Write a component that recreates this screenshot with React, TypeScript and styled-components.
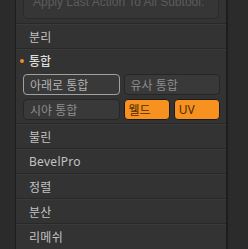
import React from 'react';
import styled, { createGlobalStyle } from 'styled-components';

const GlobalStyle = createGlobalStyle`
  html, body {
    margin: 0;
    padding: 0;
    background: #2b2b2b;
    overflow: hidden;
  }
  body {
    font-family: "Noto Sans", "Noto Sans CJK KR", sans-serif;
  }
`;

const Screen = styled.div`
  width: 248px;
  height: 249px;
  overflow: hidden;
  display: flex;
`;

const Panel = styled.div`
  margin-left: 15px;
  width: 210px;
  border-left: 1px solid #1d1d1d;
  border-right: 2px solid #1d1d1d;
  background: #333333;
  display: flex;
  flex-direction: column;
`;

const NoteBox = styled.div`
  margin: -21px 7px 4px 7px;
  height: 40px;
  box-sizing: border-box;
  padding: 15px 0 0 9px;
  background: #363636;
  border: 1px solid #2a2a2a;
  border-radius: 5px;
  color: #5c5c5c;
  font-family: "Liberation Sans", sans-serif;
  font-size: 12px;
  line-height: 14px;
  white-space: nowrap;
  overflow: hidden;
`;

const Row = styled.div`
  height: 25px;
  box-sizing: border-box;
  border-top: 1px solid #282828;
  box-shadow: inset 0 1px 0 #3a3a3a;
  display: flex;
  align-items: center;
  padding: 1px 0 0 13px;
  color: #c2c2c2;
  font-size: 12px;
  letter-spacing: 0.3px;
`;

const Section = styled.div`
  border-top: 1px solid #282828;
  box-shadow: inset 0 1px 0 #3a3a3a;
  padding-bottom: 3px;
`;

const SectionHead = styled.div`
  height: 24px;
  display: flex;
  align-items: center;
  gap: 5px;
  padding-left: 4px;
  color: #dcdcdc;
  font-size: 12px;
  font-weight: 500;
`;

const Dot = styled.span`
  width: 4px;
  height: 4px;
  border-radius: 50%;
  background: #f08c24;
`;

const ButtonGrid = styled.div`
  display: grid;
  grid-template-columns: repeat(4, 1fr);
  gap: 4px;
  padding: 1px 6px 0 7px;
`;

const Btn = styled.div<{ $span?: number; $on?: boolean; $focus?: boolean }>`
  grid-column: span ${(p) => p.$span ?? 1};
  height: 21px;
  box-sizing: border-box;
  border-radius: 4px;
  display: flex;
  align-items: center;
  padding-left: ${(p) => (p.$on ? 4 : 6)}px;
  font-size: 12px;
  background: ${(p) => (p.$on ? '#f7911f' : '#393939')};
  border: 1px solid ${(p) => (p.$focus ? '#a0a0a0' : p.$on ? '#1a1a1a' : '#262626')};
  color: ${(p) => (p.$on ? '#4a2c08' : p.$focus ? '#b4b4b4' : '#8e8e8e')};
`;

const rows = ['불린', 'BevelPro', '정렬', '분산', '리메쉬'];

export default function App() {
  return (
    <Screen>
      <GlobalStyle />
      <Panel>
        <NoteBox>Apply Last Action To All Subtool.</NoteBox>
        <Row>분리</Row>
        <Section>
          <SectionHead>
            <Dot />
            통합
          </SectionHead>
          <ButtonGrid>
            <Btn $span={2} $focus>아래로 통합</Btn>
            <Btn $span={2}>유사 통합</Btn>
            <Btn $span={2}>시야 통합</Btn>
            <Btn $on>웰드</Btn>
            <Btn $on>UV</Btn>
          </ButtonGrid>
        </Section>
        {rows.map((r) => (
          <Row key={r}>{r}</Row>
        ))}
      </Panel>
    </Screen>
  );
}
